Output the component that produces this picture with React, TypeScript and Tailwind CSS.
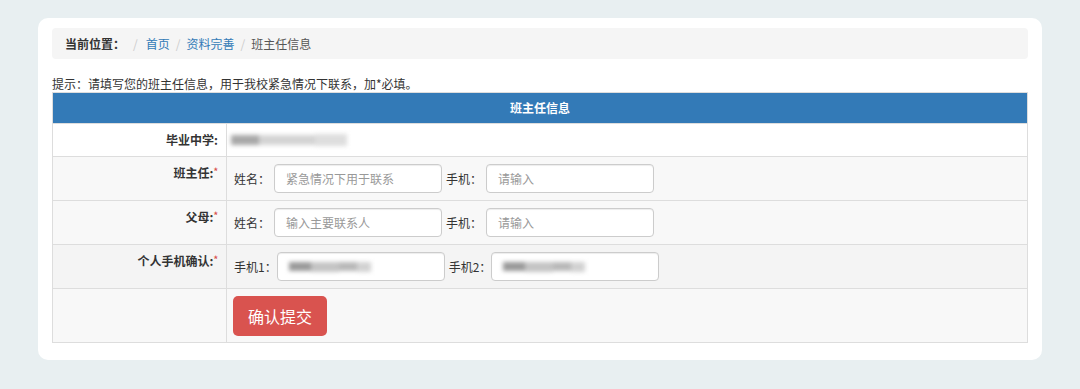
import React from "react";

const font = { fontFamily: '"Noto Sans CJK SC", "Noto Sans", sans-serif' };

const Blur = () => (
  <div className="flex h-[14px] items-center blur-[2px]">
    <span className="h-[9px] w-[22px] bg-[#9a9a9a]" />
    <span className="h-[10px] w-[28px] bg-[#c4c4c4]" />
    <span className="h-[9px] w-[18px] bg-[#b8b8b8]" />
    <span className="h-[10px] w-[14px] bg-[#d2d2d2]" />
  </div>
);

const Field = ({
  label,
  placeholder,
  blurred,
  tight,
}: {
  label: string;
  placeholder?: string;
  blurred?: boolean;
  tight?: boolean;
}) => (
  <div className="flex items-center">
    <span className={`${tight ? "mr-0" : "mr-[4px]"} text-[12px] text-[#333]`}>{label}</span>
    <div className="flex h-[29px] w-[168px] items-center rounded-[4px] border border-[#ccc] bg-white px-[11px] shadow-[inset_0_1px_1px_rgba(0,0,0,0.075)]">
      {blurred ? <Blur /> : <span className="text-[12px] text-[#999]">{placeholder}</span>}
    </div>
  </div>
);

const Label = ({ text, required }: { text: string; required?: boolean }) => (
  <td className="w-[174px] border border-[#ddd] px-[8px] pt-[7px] pb-[8px] text-right align-top text-[12px] leading-[17px] font-bold text-[#333]">
    {text}
    {required && <span className="relative top-[-3px] text-[9px] text-[#d9534f]">*</span>}
  </td>
);

export default function App() {
  return (
    <div style={font} className="min-h-[389px] w-[1080px] bg-[#e8eff1] px-[38px] pt-[18px]">
      <div className="rounded-[10px] bg-white px-[14px] pt-[10px] pb-[17px]">
        <div className="flex h-[31px] items-center rounded-[4px] bg-[#f5f5f5] px-[13px] text-[12px]">
          <span className="font-bold text-[#333]">当前位置：</span>
          <span className="mx-[8px] text-[#ccc]">/</span>
          <span className="text-[#337ab7]">首页</span>
          <span className="mx-[6px] text-[#ccc]">/</span>
          <span className="text-[#337ab7]">资料完善</span>
          <span className="mx-[6px] text-[#ccc]">/</span>
          <span className="text-[#555]">班主任信息</span>
        </div>
        <p className="mt-[16px] text-[12px] leading-[17px] text-[#333]">
          提示：请填写您的班主任信息，用于我校紧急情况下联系，加*必填。
        </p>
        <table className="w-full border-collapse border border-[#ddd]">
          <tbody>
            <tr className="bg-[#337ab7]">
              <td colSpan={2} className="h-[31px] text-center text-[12px] font-bold text-white">
                班主任信息
              </td>
            </tr>
            <tr className="bg-white">
              <Label text="毕业中学:" />
              <td className="border border-[#ddd] px-[4px] py-[6px] align-middle">
                <div className="flex items-center blur-[2px]">
                  <span className="h-[10px] w-[28px] bg-[#a8a8a8]" />
                  <span className="h-[10px] w-[56px] bg-[#d4d4d4]" />
                  <span className="h-[12px] w-[32px] bg-[#dedede]" />
                </div>
              </td>
            </tr>
            <tr className="bg-[#f8f8f8]">
              <Label text="班主任:" required />
              <td className="border border-[#ddd] px-[7px] py-[7px]">
                <div className="flex items-center gap-[4px]">
                  <Field label="姓名：" placeholder="紧急情况下用于联系" />
                  <Field label="手机：" placeholder="请输入" />
                </div>
              </td>
            </tr>
            <tr className="bg-[#f8f8f8]">
              <Label text="父母:" required />
              <td className="border border-[#ddd] px-[7px] py-[7px]">
                <div className="flex items-center gap-[4px]">
                  <Field label="姓名：" placeholder="输入主要联系人" />
                  <Field label="手机：" placeholder="请输入" />
                </div>
              </td>
            </tr>
            <tr className="bg-[#f4f4f4]">
              <Label text="个人手机确认:" required />
              <td className="border border-[#ddd] px-[7px] py-[7px]">
                <div className="flex items-center gap-[4px]">
                  <Field label="手机1：" blurred tight />
                  <Field label="手机2：" blurred tight />
                </div>
              </td>
            </tr>
            <tr className="bg-[#f8f8f8]">
              <td className="border border-[#ddd]" />
              <td className="border border-[#ddd] px-[6px] pt-[7px] pb-[6px]">
                <button
                  type="button"
                  className="h-[40px] rounded-[5px] bg-[#d9534f] px-[15px] text-[16px] text-white"
                >
                  确认提交
                </button>
              </td>
            </tr>
          </tbody>
        </table>
      </div>
    </div>
  );
}
